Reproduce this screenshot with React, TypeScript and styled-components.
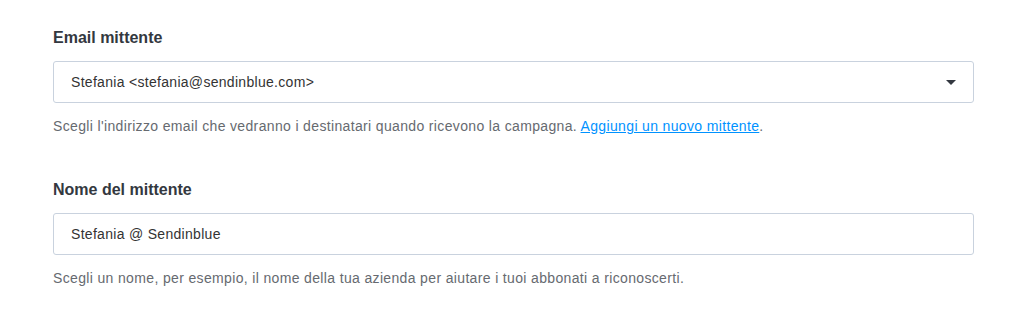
import React from 'react';
import styled, { createGlobalStyle } from 'styled-components';

const GlobalStyle = createGlobalStyle`
  body {
    margin: 0;
    background: #ffffff;
    font-family: "Liberation Sans", Arial, Helvetica, sans-serif;
    -webkit-font-smoothing: antialiased;
  }
`;

const App: React.FC = () => {
  return (
    <>
      <GlobalStyle />
      <Page>
        <Field>
          <Label>Email mittente</Label>
          <SelectBox>
            <Value>Stefania &lt;stefania@sendinblue.com&gt;</Value>
            <Caret />
          </SelectBox>
          <Help>
            Scegli l'indirizzo email che vedranno i destinatari quando ricevono la campagna.{' '}
            <Link href="#">Aggiungi un nuovo mittente</Link>.
          </Help>
        </Field>

        <Field>
          <Label>Nome del mittente</Label>
          <TextInput type="text" defaultValue="Stefania @ Sendinblue" />
          <Help>
            Scegli un nome, per esempio, il nome della tua azienda per aiutare i tuoi abbonati a riconoscerti.
          </Help>
        </Field>
      </Page>
    </>
  );
};

const Page = styled.div`
  width: 921px;
  padding: 29px 0 0 53px;
  display: flex;
  flex-direction: column;
  gap: 46px;
`;

const Field = styled.div`
  display: flex;
  flex-direction: column;
`;

const Label = styled.label`
  font-size: 16px;
  font-weight: 700;
  line-height: 18px;
  color: #333840;
  margin-bottom: 14px;
`;

const SelectBox = styled.div`
  box-sizing: border-box;
  height: 42px;
  border: 1px solid #c9d2de;
  border-radius: 3px;
  padding: 0 17px;
  display: flex;
  align-items: center;
  justify-content: space-between;
  background: #ffffff;
`;

const Value = styled.span`
  font-size: 14px;
  letter-spacing: 0.3px;
  color: #333333;
`;

const Caret = styled.span`
  width: 0;
  height: 0;
  border-left: 5px solid transparent;
  border-right: 5px solid transparent;
  border-top: 5px solid #333840;
`;

const TextInput = styled.input`
  box-sizing: border-box;
  height: 42px;
  width: 100%;
  border: 1px solid #c9d2de;
  border-radius: 3px;
  padding: 0 17px;
  font-family: inherit;
  font-size: 14px;
  letter-spacing: 0.3px;
  color: #333333;
  background: #ffffff;
  outline: none;
`;

const Help = styled.p`
  margin: 14px 0 0;
  font-size: 14px;
  letter-spacing: 0.35px;
  line-height: 18px;
  color: #666a70;
`;

const Link = styled.a`
  color: #0092ff;
  text-decoration: underline;
`;

export default App;
